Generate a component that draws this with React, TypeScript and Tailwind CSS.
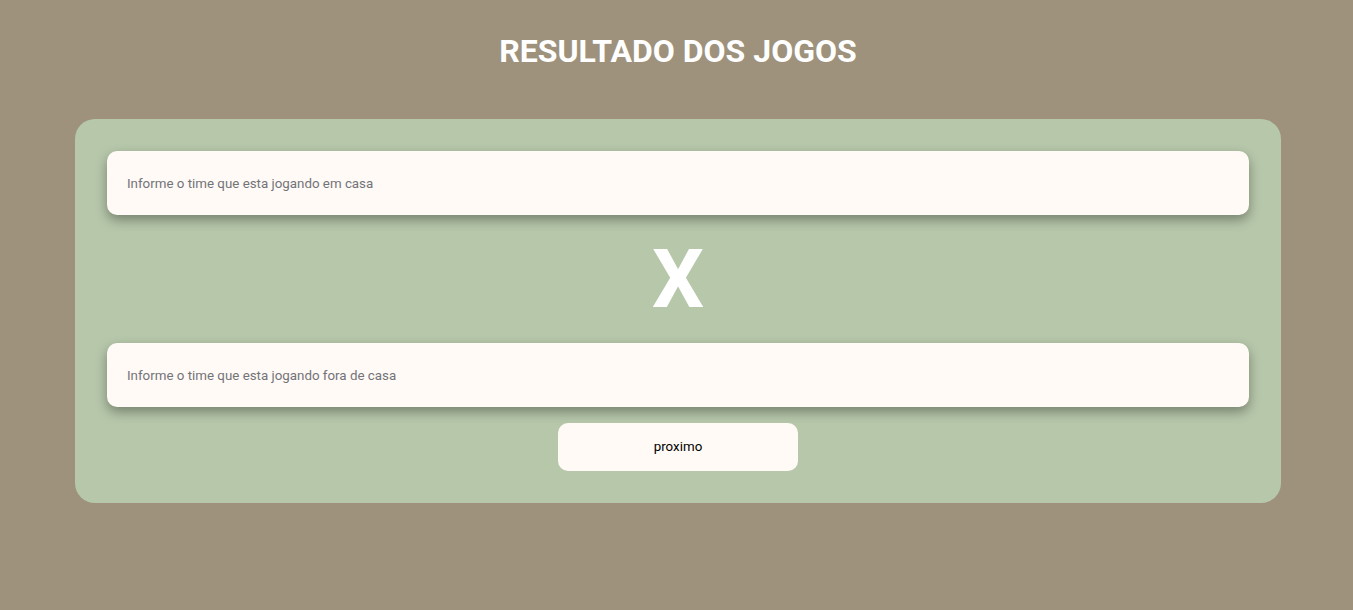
import React from "react";

export default function App() {
  return (
    <div
      className="min-h-[610px] w-full bg-[#9e927c] flex flex-col items-center pl-[3px]"
      style={{ fontFamily: "Roboto, 'Noto Sans', sans-serif" }}
    >
      <h1 className="mt-[32px] text-[32px] leading-[38px] font-bold text-white">
        RESULTADO DOS JOGOS
      </h1>
      <div className="mt-[49px] w-[1206px] rounded-[20px] bg-[#b6c7aa] p-[32px] flex flex-col items-center">
        <input
          className="w-full h-[64px] rounded-[10px] bg-[#fffaf5] px-[20px] text-[13.333px] text-[#333] placeholder:text-[#73737a] outline-none shadow-[0_5px_12px_rgba(0,0,0,0.35)]"
          placeholder="Informe o time que esta jogando em casa"
        />
        <div className="h-[128px] flex items-center justify-center text-white font-bold text-[82px] leading-none">
          X
        </div>
        <input
          className="w-full h-[64px] rounded-[10px] bg-[#fffaf5] px-[20px] text-[13.333px] text-[#333] placeholder:text-[#73737a] outline-none shadow-[0_5px_12px_rgba(0,0,0,0.35)]"
          placeholder="Informe o time que esta jogando fora de casa"
        />
        <button className="mt-[16px] w-[240px] h-[48px] rounded-[10px] bg-[#fffaf5] text-[13.333px] text-black">
          proximo
        </button>
      </div>
    </div>
  );
}
